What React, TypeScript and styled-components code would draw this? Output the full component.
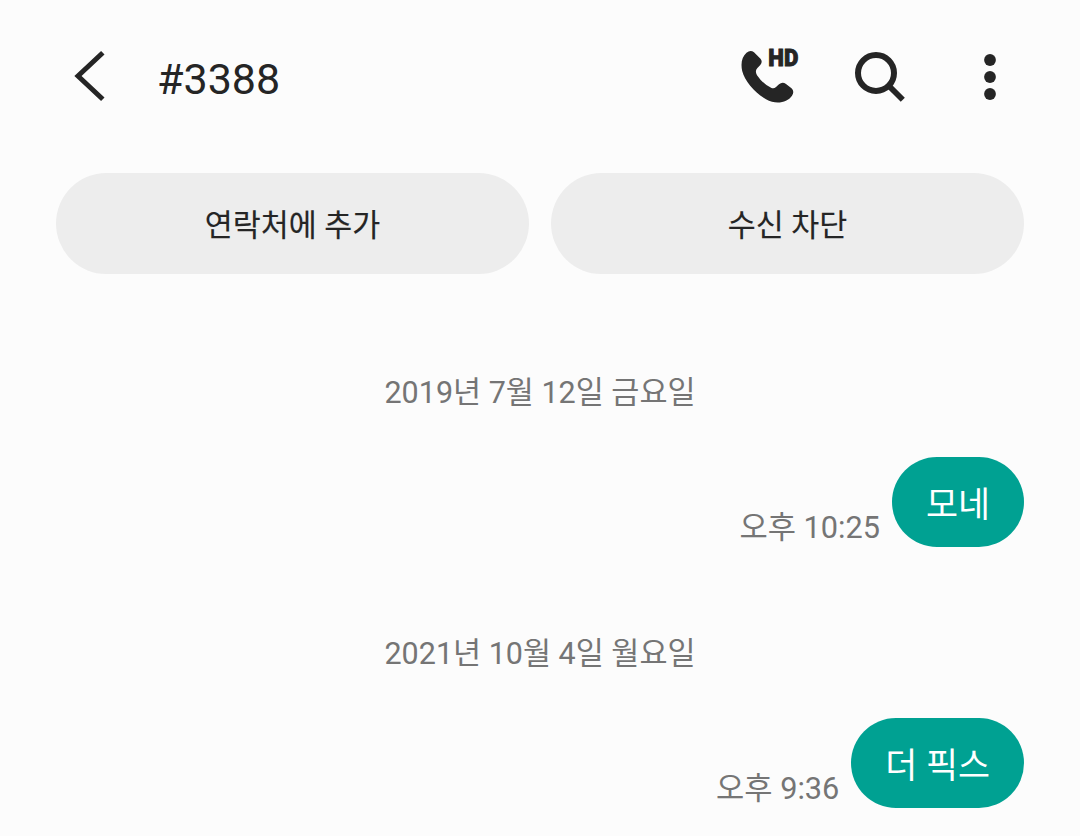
import React from 'react'
import styled, { createGlobalStyle } from 'styled-components'

const GlobalStyle = createGlobalStyle`
  body {
    margin: 0;
    background: #fcfcfc;
    font-family: Roboto, 'Noto Sans CJK KR', sans-serif;
    color: #252525;
  }
`

const Screen = styled.div`
  box-sizing: border-box;
  width: 1080px;
  height: 836px;
  padding: 0 56px;
  overflow: hidden;
`

const Header = styled.header`
  display: flex;
  align-items: center;
  height: 152px;
  margin-right: 26px;
`

const IconButton = styled.button<{ $width: number; $gap?: number }>`
  display: flex;
  flex: none;
  width: ${({ $width }) => $width}px;
  height: 60px;
  margin-left: ${({ $gap = 0 }) => $gap}px;
  padding: 0;
  border: none;
  background: none;
  color: inherit;

  svg {
    flex: none;
    overflow: visible;
  }
`

const Title = styled.h1`
  flex: 1;
  margin: 5px 0 0 51px;
  font-size: 43px;
  font-weight: 400;
  line-height: 50px;
`

const Actions = styled.div`
  display: grid;
  grid-template-columns: 1fr 1fr;
  gap: 22px;
  margin-top: 21px;
`

const ActionButton = styled.button`
  height: 101px;
  padding: 5px 0 0;
  border: none;
  border-radius: 51px;
  background: #ededed;
  color: #252525;
  font-family: inherit;
  font-size: 30.4px;
  line-height: 44px;
  -webkit-text-stroke: 0.15px #252525;
`

const DateLabel = styled.div<{ $top: number }>`
  margin-top: ${({ $top }) => $top}px;
  font-size: 30.5px;
  line-height: 46px;
  text-align: center;
  color: #757575;
`

const MessageRow = styled.div`
  display: flex;
  align-items: flex-end;
  justify-content: flex-end;
  gap: 12px;
  height: 90px;
  margin-top: 41px;
`

const Time = styled.span`
  font-size: 30.7px;
  line-height: 38px;
  color: #757575;
`

const Bubble = styled.div`
  box-sizing: border-box;
  height: 90px;
  padding: 4px 34px 0;
  border-radius: 45px;
  background: #00a192;
  color: #fff;
  font-size: 34.8px;
  line-height: 88px;
`

const BackIcon = () => (
  <svg width="34" height="60" viewBox="72 46 34 60">
    <path d="M102.8 52.7L78 76L102.8 99.3" fill="none" stroke="currentColor" strokeWidth="5" />
  </svg>
)

const HdCallIcon = () => (
  <svg width="60" height="60" viewBox="740 46 60 60" fill="currentColor">
    <path d="M746.5 52.7Q750.5 49.3 754 52.3L760.5 58.8Q763 62 760.3 65L757.2 68.2Q754.700 71 757 75.2Q763 84 771.500 88Q774 89 776 87L779 84.200Q782.500 81.300 786 84L791.500 88.300Q794.800 91.500 792 95.700C787 102.800 776 104.800 766 99.300C755.500 93.500 744.500 81 742.200 71C740.500 63 742 56.700 746.500 52.700Z" />
    <text
      x="768.300"
      y="65.500"
      fontFamily="Roboto, sans-serif"
      fontSize="23"
      fontWeight="900"
      textLength="30"
      lengthAdjust="spacingAndGlyphs"
      stroke="currentColor"
      strokeWidth="0.900"
    >
      HD
    </text>
  </svg>
)

const SearchIcon = () => (
  <svg width="52" height="60" viewBox="854 46 52 60" fill="none" stroke="currentColor">
    <circle cx="876" cy="73" r="18" strokeWidth="6" />
    <path d="M889 86L902.800 99.800" strokeWidth="5.800" />
  </svg>
)

const MoreIcon = () => (
  <svg width="16" height="60" viewBox="982 46 16 60" fill="currentColor">
    <circle cx="990" cy="60" r="5.900" />
    <circle cx="990" cy="77" r="5.900" />
    <circle cx="990" cy="94" r="5.900" />
  </svg>
)

const messages = [
  { date: '2019년 7월 12일 금요일', time: '오후 10:25', text: '모네', top: 96 },
  { date: '2021년 10월 4일 월요일', time: '오후 9:36', text: '더 픽스', top: 84 },
]

const App = () => {
  return (
    <Screen>
      <GlobalStyle />
      <Header>
        <IconButton $width={34} $gap={16} aria-label="뒤로">
          <BackIcon />
        </IconButton>
        <Title>#3388</Title>
        <IconButton $width={60} aria-label="전화">
          <HdCallIcon />
        </IconButton>
        <IconButton $width={52} $gap={54} aria-label="검색">
          <SearchIcon />
        </IconButton>
        <IconButton $width={16} $gap={76} aria-label="더보기">
          <MoreIcon />
        </IconButton>
      </Header>
      <Actions>
        <ActionButton>연락처에 추가</ActionButton>
        <ActionButton>수신 차단</ActionButton>
      </Actions>
      {messages.map(({ date, time, text, top }) => (
        <React.Fragment key={date}>
          <DateLabel $top={top}>{date}</DateLabel>
          <MessageRow>
            <Time>{time}</Time>
            <Bubble>{text}</Bubble>
          </MessageRow>
        </React.Fragment>
      ))}
    </Screen>
  )
}

export default App
